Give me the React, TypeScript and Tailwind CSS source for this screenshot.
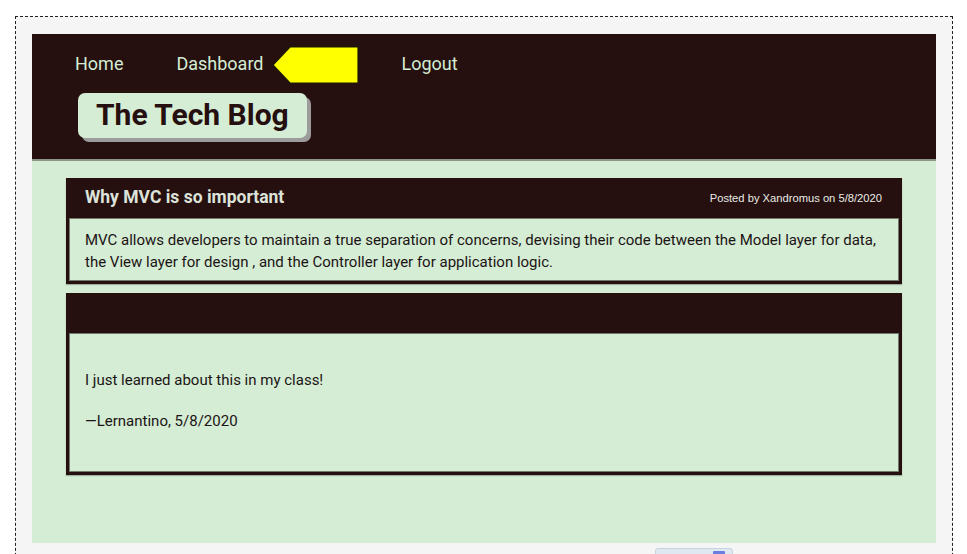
import React from 'react';

const font = { fontFamily: 'Roboto, "Noto Sans", sans-serif' };

const ArrowFlag = () => (
  <svg width="88" height="39" viewBox="0 0 88 39" className="block">
    <polygon points="1,19 18,1 86,1 86,37 18,37" fill="#ffff00" stroke="#1a1a00" strokeWidth="1.2" />
  </svg>
);

interface CardProps {
  title?: string;
  meta?: string;
  children: React.ReactNode;
  bodyClass: string;
}

const Card: React.FC<CardProps> = ({ title, meta, children, bodyClass }) => (
  <div className="border-[3px] border-[#260f0f] bg-[#260f0f] shadow-[0_1px_1px_rgba(0,0,0,0.25)]">
    <div className="h-[37px] flex items-center justify-between px-[16px] pb-[3px]">
      {title && <h2 className="text-[17.5px] font-bold text-[#dde3da] leading-none">{title}</h2>}
      {meta && (
        <span className="text-[11.2px] text-[#e8ece6] pr-[1px]" style={{ fontFamily: '"Liberation Sans", Arial, sans-serif' }}>
          {meta}
        </span>
      )}
    </div>
    <div className={`bg-[#d4edd4] border border-[#6f7a6b] text-[15px] leading-[22px] text-[#1c1414] pl-[15px] pr-[16px] ${bodyClass}`}>
      {children}
    </div>
  </div>
);

export default function App() {
  return (
    <div className="bg-white w-[967px] h-[554px] overflow-hidden pt-[16px] pl-[15px]" style={font}>
      <div className="w-[938px] h-[560px] border border-dashed border-[#222] bg-[#f5f5f5] pt-[17px] px-[16px]">
        <div className="w-[904px]">
          {/* header */}
          <header className="bg-[#260f0f] h-[127px] border-b-2 border-[#8e968a] pl-[43px] pt-[13px]">
            <nav className="flex items-center text-[18px] text-[#d4edd4] h-[39px] -mt-[1px]">
              <span className="-mt-[4px]">Home</span>
              <span className="ml-[53px] -mt-[4px]">Dashboard</span>
              <span className="ml-[8px]"><ArrowFlag /></span>
              <span className="ml-[42px] -mt-[4px]">Logout</span>
            </nav>
            <div className="mt-[8px] ml-[3px] inline-block bg-[#d4edd4] rounded-[7px] px-[18px] h-[45px] leading-[44px] text-[30px] font-bold text-[#260f0f] shadow-[4px_4px_0_#9c9c9c]">
              The Tech Blog
            </div>
          </header>

          {/* main */}
          <main className="bg-[#d4edd4] h-[382px] px-[34px] pt-[17px] flex flex-col gap-[9px]">
            <Card title="Why MVC is so important" meta="Posted by Xandromus on 5/8/2020" bodyClass="pt-[10px] pb-[7px]">
              <p>
                MVC allows developers to maintain a true separation of concerns, devising their code between the Model layer for data,
                the View layer for design , and the Controller layer for application logic.
              </p>
            </Card>
            <Card bodyClass="pt-[35px] pb-[39px]">
              <p>I just learned about this in my class!</p>
              <p className="mt-[19px]">—Lernantino, 5/8/2020</p>
            </Card>
          </main>

          {/* bottom widget, cut off by the window */}
          <div className="flex mt-[5px] pl-[623px]">
            <div className="w-[78px] h-[12px] rounded-t-[3px] border border-[#c6d4de] bg-[#dfe8f0] flex justify-end pr-[7px] pt-[2px]">
              <div className="w-[12px] h-[8px] bg-[#6c7fe0] rounded-[1px]" />
            </div>
          </div>
        </div>
      </div>
    </div>
  );
}
